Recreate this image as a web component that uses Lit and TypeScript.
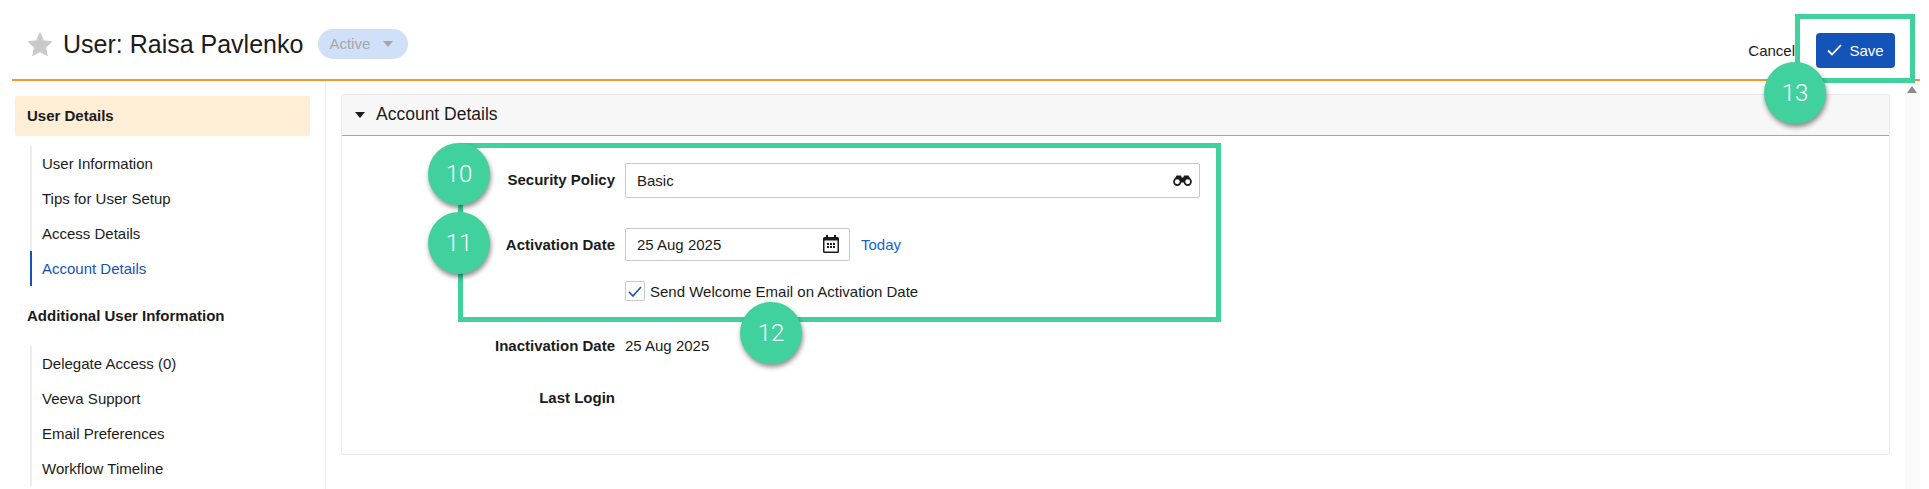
import { LitElement, css, html } from "lit";
import { customElement } from "lit/decorators.js";

const primaryLinks = ["User Information", "Tips for User Setup", "Access Details", "Account Details"];
const extraLinks = ["Delegate Access (0)", "Veeva Support", "Email Preferences", "Workflow Timeline"];

@customElement("app-root")
export class AppRoot extends LitElement {
  static styles = css`
    :host {
      display: block;
      position: relative;
      width: 1929px;
      height: 489px;
      overflow: hidden;
      background: #fff;
      color: #1b1b1b;
      font-family: "Liberation Sans", Arial, sans-serif;
      font-size: 15px;
    }

    .page {
      width: 1908px;
      margin-left: 12px;
    }

    /* Header */
    .header {
      display: flex;
      align-items: center;
      box-sizing: border-box;
      height: 81px;
      padding-top: 9px;
      border-bottom: 2px solid #f7962d;
    }
    .star {
      width: 26px;
      height: 25px;
      margin-left: 15px;
      fill: #c9c9c9;
      stroke: #c9c9c9;
      stroke-width: 1;
      stroke-linejoin: round;
    }
    .title {
      margin: 0 0 0 10px;
      font-size: 25px;
      font-weight: 400;
      line-height: 30px;
    }
    .status {
      display: flex;
      align-items: center;
      height: 30px;
      width: 90px;
      box-sizing: border-box;
      margin-left: 15px;
      padding: 0 0 1px 11px;
      border-radius: 15px;
      background: #d0e0f8;
      color: #a7a7a7;
    }
    .status i {
      width: 0;
      height: 0;
      margin-left: 13px;
      border: 5px solid transparent;
      border-top: 6px solid #a7a7a7;
      border-bottom: 0;
    }
    .actions {
      display: flex;
      align-items: center;
      margin: 12px 25px 0 auto;
    }
    .cancel {
      margin-right: 21px;
    }
    .save {
      display: flex;
      align-items: center;
      justify-content: center;
      gap: 7px;
      width: 79px;
      height: 35px;
      padding: 0;
      border: 0;
      border-radius: 4px;
      background: #1453b8;
      color: #fff;
      font: inherit;
    }

    /* Side navigation */
    .content {
      display: flex;
      height: 408px;
    }
    .side {
      flex: none;
      width: 313px;
      box-sizing: content-box;
      border-right: 1px solid #ececec;
      padding-top: 15px;
    }
    .section {
      display: flex;
      align-items: center;
      box-sizing: content-box;
      width: 283px;
      height: 39px;
      padding: 0 0 1px 12px;
      margin-left: 3px;
      border-radius: 2px;
      font-weight: 700;
    }
    .section.open {
      background: #feeed5;
    }
    .section.plain {
      margin-top: 10px;
      margin-bottom: 10px;
    }
    .links {
      margin: 10px 0 0 18px;
      border-left: 2px solid #ececec;
    }
    .links a {
      display: flex;
      align-items: center;
      height: 34px;
      margin-left: -2px;
      padding: 0 0 1px 10px;
      border-left: 2px solid transparent;
    }
    .links a.current {
      border-left-color: #1453b8;
      color: #1453b8;
    }

    /* Main panel */
    .main {
      flex: 1;
      display: flex;
      padding: 13px 0 0 15px;
    }
    .panel {
      width: 1547px;
      height: 359px;
      border: 1px solid #ececec;
      border-radius: 2px;
    }
    .panel-head {
      display: flex;
      align-items: center;
      height: 38px;
      padding-bottom: 2px;
      border-bottom: 1px solid #f7962d;
      background: #f7f7f7;
      font-size: 17.5px;
    }
    .panel-head i {
      width: 0;
      height: 0;
      margin: 2px 11px 0 13px;
      border: 5px solid transparent;
      border-top: 6px solid #1b1b1b;
      border-bottom: 0;
    }
    .form {
      display: grid;
      grid-template-columns: 273px 1fr;
      grid-auto-rows: min-content;
      column-gap: 10px;
      padding-top: 27px;
      align-items: center;
    }
    .label {
      font-weight: 700;
      text-align: right;
    }
    .label.policy-label {
      padding-bottom: 3px;
    }
    .input {
      display: flex;
      align-items: center;
      box-sizing: border-box;
      border: 1px solid #c9c9c9;
      border-radius: 2px;
      background: #fff;
      padding: 0 7px 1px 11px;
    }
    .input svg {
      margin-left: auto;
    }
    .policy {
      width: 575px;
      height: 35px;
    }
    .date-row {
      display: flex;
      align-items: center;
      margin-top: 30px;
    }
    .label.date-label {
      margin-top: 30px;
      padding-bottom: 1px;
    }
    .date {
      width: 225px;
      height: 33px;
      padding-right: 10px;
    }
    .today {
      margin: 0 0 1px 11px;
      color: #1565d0;
    }
    .check-row {
      display: flex;
      align-items: center;
      gap: 5px;
      margin-top: 20px;
      grid-column: 2;
    }
    .box {
      display: flex;
      align-items: center;
      justify-content: center;
      width: 20px;
      height: 20px;
      box-sizing: border-box;
      border: 1px solid #c9c9c9;
      border-radius: 2px;
    }
    .row-gap,
    .row-tall {
      margin-top: 36px;
      line-height: 16px;
      min-height: 16px;
    }
    .row-gap {
      margin-top: 37px;
    }

    .scroll {
      margin-left: auto;
      margin-top: -13px;
      width: 15px;
      height: 408px;
      background: #fafafa;
    }
    .scroll i {
      display: block;
      width: 0;
      height: 0;
      margin: 5px 0 0 2px;
      border: 5px solid transparent;
      border-bottom: 7px solid #8a8a8a;
      border-top: 0;
    }

    /* Tutorial callouts */
    .frame {
      position: absolute;
      box-sizing: border-box;
      border: 5px solid #41d19f;
    }
    .frame.form-frame {
      left: 458px;
      top: 143px;
      width: 763px;
      height: 179px;
    }
    .frame.save-frame {
      left: 1795px;
      top: 14px;
      width: 120px;
      height: 69px;
    }
    .pin {
      position: absolute;
      display: flex;
      align-items: center;
      justify-content: center;
      width: 62px;
      height: 62px;
      border-radius: 50%;
      background: #41d19f;
      box-shadow: 1px 3px 5px rgba(0, 0, 0, 0.45);
      color: #fff;
      font-family: Roboto, sans-serif;
      font-size: 24px;
      font-weight: 300;
    }
  `;

  private renderLinks(items: string[], current?: string) {
    return html`<nav class="links">
      ${items.map((l) => html`<a class=${l === current ? "current" : ""}>${l}</a>`)}
    </nav>`;
  }

  private pin(n: number, cx: number, cy: number) {
    return html`<div class="pin" style="left:${cx - 31}px;top:${cy - 31}px">${n}</div>`;
  }

  render() {
    return html`
      <div class="page">
        <header class="header">
          <svg class="star" viewBox="0 0 24 24"><path d="M12 1l3.300 7.400 7.900 0.900-5.900 5.400 1.600 7.900L12 18.700l-6.900 3.900 1.600-7.900L.8 9.300l7.900-.9z" /></svg>
          <h1 class="title">User: Raisa Pavlenko</h1>
          <div class="status">Active<i></i></div>
          <div class="actions">
            <span class="cancel">Cancel</span>
            <button class="save">
              <svg width="15" height="12" viewBox="0 0 15 12" fill="none" stroke="#fff" stroke-width="1.800"><path d="M1 6.500l4 4L14 1" /></svg>
              Save
            </button>
          </div>
        </header>
        <div class="content">
          <aside class="side">
            <div class="section open">User Details</div>
            ${this.renderLinks(primaryLinks, "Account Details")}
            <div class="section plain">Additional User Information</div>
            ${this.renderLinks(extraLinks)}
          </aside>
          <main class="main">
            <section class="panel">
              <div class="panel-head"><i></i>Account Details</div>
              <div class="form">
                <div class="label policy-label">Security Policy</div>
                <div class="input policy">
                  Basic
                  <svg width="19" height="11" viewBox="0 0 19 11">
                    <circle cx="4.300" cy="6.800" r="3.300" fill="none" stroke="#1b1b1b" stroke-width="1.700" />
                    <circle cx="14.700" cy="6.800" r="3.300" fill="none" stroke="#1b1b1b" stroke-width="1.700" />
                    <path fill="#1b1b1b" d="M1.500 4L3.500 .5h4.500l.7 2h1.600l.7-2h4.500L17.500 4 14 3.500 11 5.500v2H8v-2L5 3.500z" />
                  </svg>
                </div>
                <div class="label date-label">Activation Date</div>
                <div class="date-row">
                  <div class="input date">
                    25 Aug 2025
                    <svg width="16" height="18" viewBox="0 0 16 18">
                      <path fill="#1b1b1b" d="M3 0h2v2h6V0h2v2h1.500A1.500 1.500 0 0 1 16 3.500v13a1.500 1.500 0 0 1-1.500 1.500h-13A1.500 1.500 0 0 1 0 16.500v-13A1.500 1.500 0 0 1 1.500 2H3z" />
                      <rect x="1.500" y="5.500" width="13" height="11" fill="#fff" />
                      <path fill="#1b1b1b" d="M4 8h2v2H4zM7 8h2v2H7zM10 8h2v2h-2zM4 11h2v2H4zM7 11h2v2H7zM10 11h2v2h-2z" />
                    </svg>
                  </div>
                  <a class="today">Today</a>
                </div>
                <div class="check-row">
                  <span class="box">
                    <svg width="14" height="11" viewBox="0 0 14 11" fill="none" stroke="#1453b8" stroke-width="1.600"><path d="M1 6l4 4 8-9" /></svg>
                  </span>
                  Send Welcome Email on Activation Date
                </div>
                <div class="label row-gap">Inactivation Date</div>
                <div class="row-gap">25 Aug 2025</div>
                <div class="label row-tall">Last Login</div>
                <div class="row-tall"></div>
              </div>
            </section>
            <div class="scroll"><i></i></div>
          </main>
        </div>
      </div>
      <div class="frame form-frame"></div>
      <div class="frame save-frame"></div>
      ${this.pin(10, 459, 174)} ${this.pin(11, 459, 243)} ${this.pin(12, 771, 333)} ${this.pin(13, 1795, 93)}
    `;
  }
}
